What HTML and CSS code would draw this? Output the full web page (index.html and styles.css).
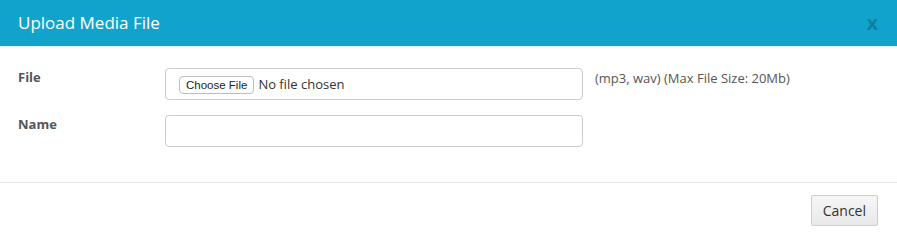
FILE: index.html
```html
<!DOCTYPE html>
<html lang="en">
<head>
<meta charset="utf-8">
<title>Upload Media File</title>
<link rel="stylesheet" href="styles.css">
</head>
<body>
<div class="modal">
  <div class="modal-header">
    <h4 class="modal-title">Upload Media File</h4>
    <button type="button" class="close">x</button>
  </div>
  <form class="modal-body">
    <div class="form-row">
      <label class="form-label" for="file">File</label>
      <div class="form-field">
        <input class="form-control file-control" type="file" id="file">
      </div>
      <span class="help">(mp3, wav) (Max File Size: 20Mb)</span>
    </div>
    <div class="form-row">
      <label class="form-label" for="name">Name</label>
      <div class="form-field">
        <input class="form-control" type="text" id="name">
      </div>
    </div>
  </form>
  <div class="modal-footer">
    <button type="button" class="btn">Cancel</button>
  </div>
</div>
</body>
</html>
```

FILE: styles.css
```css
* { box-sizing: border-box; }
html, body { margin: 0; padding: 0; background: #fff; }
body {
  font-family: "Open Sans", "Noto Sans", sans-serif;
  font-size: 13px;
  color: #555;
}
.modal { width: 897px; }
.modal-header {
  background: #12a3cc;
  height: 47px;
  padding: 0 19px 0 18px;
  display: flex;
  align-items: center;
  justify-content: space-between;
  border-bottom: 1px solid #e8f4f8;
}
.modal-title {
  margin: 0;
  color: #fff;
  font-size: 17px;
  font-weight: 400;
  line-height: 22px;
}
.close {
  background: none;
  border: 0;
  padding: 0;
  margin-top: 0;
  font-family: "Open Sans", sans-serif;
  font-size: 20px;
  font-weight: 700;
  line-height: 20px;
  color: #000;
  opacity: 0.2;
}
.modal-body {
  margin: 0;
  padding: 21px 18px 35px;
  display: flex;
  flex-direction: column;
  gap: 15px;
}
.form-row {
  display: flex;
  align-items: flex-start;
}
.form-label {
  width: 147px;
  flex: none;
  font-weight: 700;
  font-size: 13px;
  color: #555;
  padding-top: 0;
  line-height: 18px;
}
.form-field { width: 418px; flex: none; }
.form-control {
  display: block;
  width: 100%;
  height: 32px;
  border: 1px solid #ccc;
  border-radius: 4px;
  padding: 6px 12px;
  font-family: "Open Sans", sans-serif;
  font-size: 13px;
  color: #333;
  background: #fff;
}
.file-control {
  padding: 6px 13px;
  line-height: 18px;
}
.file-control::file-selector-button {
  font-family: "Liberation Sans", Arial, sans-serif;
  font-size: 11.5px;
  color: #222;
  background: #fff;
  border: 1px solid #bdbdbd;
  border-radius: 4px;
  padding: 1px 6px;
  height: 18px;
  margin-right: 4px;
}
.help {
  margin-left: 12px;
  padding-top: 1px;
  line-height: 18px;
  color: #555;
}
.modal-footer {
  border-top: 1px solid #e5e5e5;
  padding: 12px 19px 11px;
  display: flex;
  justify-content: flex-end;
}
.btn {
  font-family: "Open Sans", sans-serif;
  font-size: 14px;
  color: #333;
  height: 31px;
  padding: 0 11px;
  border: 1px solid #ccc;
  border-radius: 2px;
  background: linear-gradient(#f7f7f7, #e8e8e8);
}
```
